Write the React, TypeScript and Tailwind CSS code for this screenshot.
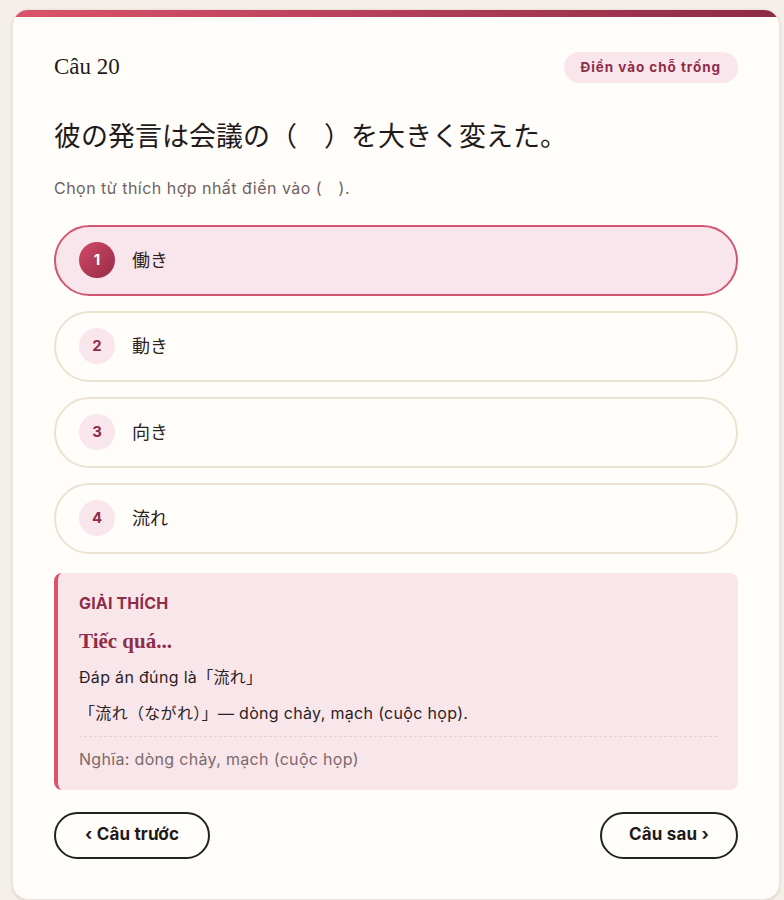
import React from 'react';

const SANS = 'font-["Inter","Noto_Sans","Noto_Sans_CJK_JP",sans-serif]';

const OPTIONS = [
    { id: 1, text: '働き' },
    { id: 2, text: '動き' },
    { id: 3, text: '向き' },
    { id: 4, text: '流れ' },
];

const SELECTED = 1;

function OptionRow({ id, text }: { id: number; text: string }) {
    const active = id === SELECTED;
    return (
        <button
            className={`flex h-[71px] w-full items-center gap-[17px] rounded-full border-2 pl-[23px] text-left ${
                active ? 'border-[#d2566f] bg-[#f9e6ec]' : 'border-[#ebe3d2] bg-[#fffdf9]'
            }`}
        >
            <span
                className={`flex h-9 w-9 items-center justify-center rounded-full text-[15px] font-bold ${
                    active
                        ? 'bg-gradient-to-br from-[#d24a67] to-[#962a47] text-white'
                        : 'bg-[#f9e6ec] text-[#8e2d48]'
                }`}
            >
                {id}
            </span>
            <span className="text-[18px] text-[#2b2222]">{text}</span>
        </button>
    );
}

export default function App() {
    return (
        <div className={`min-h-[900px] bg-[#f4efe8] pl-3 pr-1 pt-[9px] ${SANS}`}>
            <div className="overflow-hidden rounded-2xl border border-[#ebe4da] bg-[#fffdfa] shadow-sm">
                <div className="h-[7px] bg-gradient-to-r from-[#da546b] to-[#8e2b47]" />

                <div className="px-[41px] pt-[33px] pb-[40px]">
                    {/* Header */}
                    <div className="flex items-center justify-between">
                        <h2 className='font-["Liberation_Serif","Noto_Sans_CJK_JP",serif] text-[23px] text-[#1f1a1a]'>
                            Câu 20
                        </h2>
                        <span className="flex h-[31px] items-center rounded-full bg-[#f9e6ec] px-[17px] text-[13.5px] font-bold tracking-[0.07em] text-[#8e2d48]">
                            Điền vào chỗ trống
                        </span>
                    </div>

                    {/* Question */}
                    <p className='mt-[32px] font-["Liberation_Serif","Noto_Sans_CJK_JP",serif] text-[27px] leading-[40px] text-[#1f1a1a]'>
                        彼の発言は会議の（　）を大きく変えた。
                    </p>
                    <p className="mt-[20px] text-[16px] leading-[22px] tracking-[0.03em] text-[#6e6262]">
                        Chọn từ thích hợp nhất điền vào (　).
                    </p>

                    {/* Options */}
                    <div className="mt-[26px] flex flex-col gap-[15px]">
                        {OPTIONS.map((o) => (
                            <OptionRow key={o.id} {...o} />
                        ))}
                    </div>

                    {/* Explanation */}
                    <div className="mt-[19px] rounded-lg border-l-4 border-[#d9536a] bg-[#f9e6eb] px-[21px] py-[20px]">
                        <div className="text-[16px] font-bold leading-[20px] tracking-[0.01em] text-[#8e2d48]">GIẢI THÍCH</div>
                        <div className='mt-[15px] font-["Liberation_Serif",serif] text-[21px] font-bold leading-[26px] text-[#8e2d48]'>
                            Tiếc quá...
                        </div>
                        <p className="mt-[12px] text-[16px] leading-[22px] tracking-[0.02em] text-[#2b2222]">Đáp án đúng là「流れ」</p>
                        <p className="mt-[14px] text-[16px] leading-[22px] tracking-[0.02em] text-[#2b2222]">
                            「流れ（ながれ）」— dòng chảy, mạch (cuộc họp).
                        </p>
                        <div className="mt-[12px] border-t border-dashed border-[#e6cfd5]" />
                        <p className="mt-[11px] text-[16px] leading-[22px] tracking-[0.02em] text-[#7a6a6a]">
                            Nghĩa: dòng chảy, mạch (cuộc họp)
                        </p>
                    </div>

                    {/* Navigation */}
                    <div className="mt-[22px] flex items-center justify-between">
                        <button className="h-[47px] rounded-full border-2 border-[#222] px-[29px] text-[17px] font-bold tracking-[0.01em] text-[#1f1a1a]">
                            ‹ Câu trước
                        </button>
                        <button className="h-[47px] rounded-full border-2 border-[#222] px-[27px] text-[17px] font-bold tracking-[0.01em] text-[#1f1a1a]">
                            Câu sau ›
                        </button>
                    </div>
                </div>
            </div>
        </div>
    );
}
